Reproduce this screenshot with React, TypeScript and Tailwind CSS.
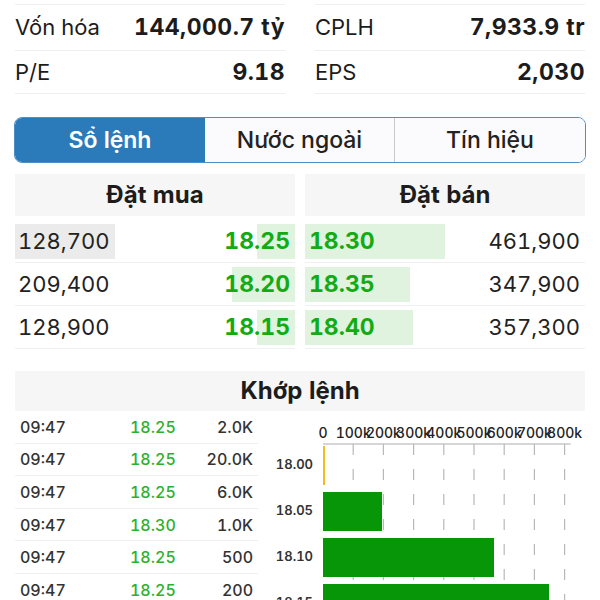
import React from "react";

const ticks = ["0", "100k", "200k", "300k", "400k", "500k", "600k", "700k", "800k"];

function Chart() {
  const x0 = 65;
  const step = 30.2;
  const axisY = 33;
  const bands = [
    { label: "18.00", w: 2, color: "#f2bd1d" },
    { label: "18.05", w: 59, color: "#079607" },
    { label: "18.10", w: 171, color: "#079607" },
    { label: "18.15", w: 226, color: "#079607" },
  ];
  return (
    <svg width="342" height="200" className="block shrink-0">
      {ticks.map((t, i) => (
        <text
          key={t}
          x={x0 + i * step}
          y={27}
          textAnchor="middle"
          fontSize="14"
          fontWeight="500"
          fill="#222"
          fontFamily="Inter, sans-serif"
          style={{ fontVariantNumeric: "tabular-nums" }}
        >
          {t}
        </text>
      ))}
      <line x1={x0} y1={axisY} x2={x0 + 8 * step + 6} y2={axisY} stroke="#c8c8c8" strokeWidth="1.5" />
      {ticks.slice(1).map((t, i) => (
        <line
          key={t}
          x1={x0 + (i + 1) * step}
          x2={x0 + (i + 1) * step}
          y1={axisY}
          y2={200}
          stroke="#b8b8b8"
          strokeWidth="1.2"
          strokeDasharray="11 14"
        />
      ))}
      {bands.map((b, i) => {
        const y = 35 + i * 46;
        return (
          <g key={b.label}>
            <rect x={x0} y={y} width={b.w} height={39} fill={b.color} />
            <text
              x={55}
              y={y + 19.5}
              dominantBaseline="middle"
              textAnchor="end"
              fontSize="13"
              fontWeight="600"
              fill="#333"
              fontFamily="Inter, sans-serif"
            >
              {b.label}
            </text>
          </g>
        );
      })}
    </svg>
  );
}

const buy = [
  { vol: "128,700", price: "18.25", bar: 38, hl: true },
  { vol: "209,400", price: "18.20", bar: 63, hl: false },
  { vol: "128,900", price: "18.15", bar: 38, hl: false },
];
const sell = [
  { vol: "461,900", price: "18.30", bar: 140 },
  { vol: "347,900", price: "18.35", bar: 105 },
  { vol: "357,300", price: "18.40", bar: 108 },
];
const trades = [
  ["09:47", "18.25", "2.0K"],
  ["09:47", "18.25", "20.0K"],
  ["09:47", "18.25", "6.0K"],
  ["09:47", "18.30", "1.0K"],
  ["09:47", "18.25", "500"],
  ["09:47", "18.25", "200"],
];

function StatCol({ a, av, b, bv }: { a: string; av: string; b: string; bv: string }) {
  return (
    <div className="border-t border-[#efefef]">
      <div className="h-[46px] flex items-center justify-between border-b border-[#efefef]">
        <span className="text-[22px] text-[#1c1c1c]">{a}</span>
        <span className="text-[23px] font-bold text-[#1c1c1c] tracking-[0.02em]">{av}</span>
      </div>
      <div className="h-[43px] flex items-center justify-between border-b border-[#efefef]">
        <span className="text-[22px] text-[#1c1c1c]">{b}</span>
        <span className="text-[23px] font-bold text-[#1c1c1c] tracking-[0.02em]">{bv}</span>
      </div>
    </div>
  );
}

export default function App() {
  return (
    <div className="w-[600px] h-[600px] overflow-hidden bg-white font-['Inter','Noto_Sans',sans-serif] tabular-nums text-[#1c1c1c]">
      <div className="pt-[4px] px-[15px] grid grid-cols-2 gap-[30px]">
        <StatCol a="Vốn hóa" av="144,000.7 tỷ" b="P/E" bv="9.18" />
        <StatCol a="CPLH" av="7,933.9 tr" b="EPS" bv="2,030" />
      </div>

      <div className="mt-[23px] mx-[14px] h-[46px] grid grid-cols-3 border border-[#4b8fc6] rounded-[8px] overflow-hidden">
        <div className="bg-[#2b7bba] flex items-center justify-center text-white text-[23px] font-semibold">
          Sổ lệnh
        </div>
        <div className="bg-[#fbfbfd] flex items-center justify-center text-[23px] font-medium text-[#222] border-r border-[#c9c9cf]">
          Nước ngoài
        </div>
        <div className="bg-[#fbfbfd] flex items-center justify-center text-[23px] font-medium text-[#222]">
          Tín hiệu
        </div>
      </div>

      <div className="mt-[11px] px-[15px] grid grid-cols-2 gap-[10px]">
        <div>
          <div className="h-[42px] bg-[#f6f6f6] flex items-center justify-center text-[24px] font-bold">Đặt mua</div>
          <div className="mt-[4px]">
            {buy.map((r) => (
              <div key={r.price} className="h-[43px] flex items-center justify-between border-b border-[#f0f0f0]">
                <div className={`h-[35px] flex items-center pl-[3px] pr-[5px] text-[22px] text-[#222] ${r.hl ? "bg-[#ebebeb]" : ""}`}>
                  {r.vol}
                </div>
                <div className="relative h-[35px] flex items-center justify-end pr-[5px]">
                  <div className="absolute right-0 top-0 bottom-0 bg-[#dff3df]" style={{ width: r.bar }} />
                  <span className="relative text-[23px] font-bold text-[#13ab13]">{r.price}</span>
                </div>
              </div>
            ))}
          </div>
        </div>
        <div>
          <div className="h-[42px] bg-[#f6f6f6] flex items-center justify-center text-[24px] font-bold">Đặt bán</div>
          <div className="mt-[4px]">
            {sell.map((r) => (
              <div key={r.price} className="h-[43px] flex items-center justify-between border-b border-[#f0f0f0]">
                <div className="relative h-[35px] flex items-center pl-[4px]">
                  <div className="absolute left-0 top-0 bottom-0 bg-[#dff3df]" style={{ width: r.bar }} />
                  <span className="relative text-[23px] font-bold text-[#13ab13]">{r.price}</span>
                </div>
                <span className="text-[22px] text-[#222] pr-[5px]">{r.vol}</span>
              </div>
            ))}
          </div>
        </div>
      </div>

      <div className="mt-[22px] mx-[15px] h-[40px] bg-[#f6f6f6] flex items-center justify-center text-[24px] font-bold">
        Khớp lệnh
      </div>
      <div className="flex pl-[15px]">
        <div className="w-[243px] shrink-0">
          {trades.map((t, i) => (
            <div key={i} className="h-[32.6px] flex items-center border-b border-[#f0f0f0] text-[16px] font-medium">
              <span className="w-[115px] pl-[5px] text-[#333]">{t[0]}</span>
              <span className="w-[70px] text-[#2cb12c]">{t[1]}</span>
              <span className="flex-1 text-right pr-[5px] text-[#333]">{t[2]}</span>
            </div>
          ))}
        </div>
        <Chart />
      </div>
    </div>
  );
}
